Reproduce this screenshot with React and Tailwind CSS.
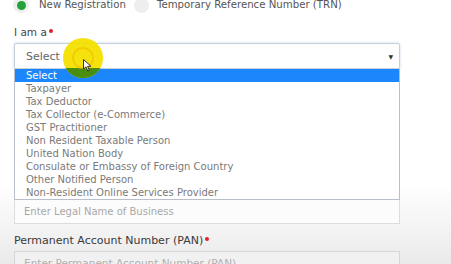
const OPTIONS = [
  'Select',
  'Taxpayer',
  'Tax Deductor',
  'Tax Collector (e-Commerce)',
  'GST Practitioner',
  'Non Resident Taxable Person',
  'United Nation Body',
  'Consulate or Embassy of Foreign Country',
  'Other Notified Person',
  'Non-Resident Online Services Provider',
]

const font = { fontFamily: '"DejaVu Sans", Verdana, sans-serif' }

function Required() {
  return <span className="inline-block w-[4px] h-[4px] rounded-full bg-[#e0202a] ml-[2px] -mt-[5px]" />
}

export default function App() {
  return (
    <div
      className="relative w-[451px] h-[264px] overflow-hidden bg-[linear-gradient(to_bottom,#ffffff_0%,#ffffff_70%,#eaeaea_100%)]"
      style={font}
    >
      {/* Radio row, cut off at the top */}
      <div className="flex items-center h-[10px] pl-[13px] text-[10.2px] text-[#555]">
        <span className="w-[16px] h-[16px] rounded-full bg-[#eef0ee] flex items-center justify-center">
          <span className="w-[9px] h-[9px] rounded-full bg-[#22a33a]" />
        </span>
        <span className="ml-[10px]">New Registration</span>
        <span className="ml-[8px] w-[15px] h-[15px] rounded-full bg-[#eeeeee]" />
        <span className="ml-[8px]">Temporary Reference Number (TRN)</span>
      </div>

      <div className="pl-[14px] w-[400px]">
        {/* I am a */}
        <div className="mt-[17px] h-[12px] flex items-center text-[10.5px] text-[#444]">
          I am a<Required />
        </div>

        {/* Select box */}
        <div className="mt-[4px] h-[26px] border border-[#c5cfdc] rounded-t-[2px] flex items-center justify-between pl-[11px] pr-[6px] shadow-[0_0_3px_rgba(120,150,200,0.35)] bg-white">
          <span className="text-[11px] text-[#666] mt-[2px]">Select</span>
          <span className="text-[6px] text-[#333]">▼</span>
        </div>

        {/* Dropdown list */}
        <div className="border-x border-b border-[#b9bfca] bg-white">
          {OPTIONS.map((opt, i) => (
            <div
              key={opt}
              className={`h-[13px] flex items-center pl-[11px] text-[10px] leading-none ${
                i === 0 ? 'bg-[#1b87fb] text-white' : 'text-[#7a7a7a]'
              }`}
            >
              {opt}
            </div>
          ))}
        </div>

        {/* Legal name input */}
        <div className="h-[24px] border border-[#dcdcdc] border-t-0 flex items-center pl-[9px] text-[10px] text-[#a8a8a8] bg-[#fcfcfc]">
          Enter Legal Name of Business
        </div>

        {/* PAN */}
        <div className="mt-[11px] h-[12px] flex items-center text-[11px] text-[#3a3a3a]">
          Permanent Account Number (PAN)
          <Required />
        </div>
        <div className="mt-[4px] h-[26px] border border-[#d6d6d6] flex items-center pl-[9px] text-[10.5px] text-[#b0b0b0] bg-[#f1f1f1]">
          Enter Permanent Account Number (PAN)
        </div>
      </div>

      {/* Cursor highlight */}
      <div className="absolute left-[63px] top-[38px] w-[40px] h-[40px] rounded-full overflow-hidden pointer-events-none">
        <div className="absolute inset-0 bg-[#f4e000] opacity-95" />
        <div className="absolute left-0 right-0 top-[30px] bottom-0 bg-[#4a8e10]" />
        <div className="absolute left-[9px] top-[9px] w-[22px] h-[22px] rounded-full border-[2px] border-[#f0c400]/70" />
      </div>
      <svg
        className="absolute left-[83px] top-[59px] pointer-events-none"
        width="9"
        height="13"
        viewBox="0 0 9 13"
      >
        <path d="M0.5 0.5 L0.5 10 L3 7.8 L4.8 12 L6.3 11.3 L4.6 7.3 L8 7.3 Z" fill="#fff" stroke="#222" strokeWidth="0.9" />
      </svg>
    </div>
  )
}
